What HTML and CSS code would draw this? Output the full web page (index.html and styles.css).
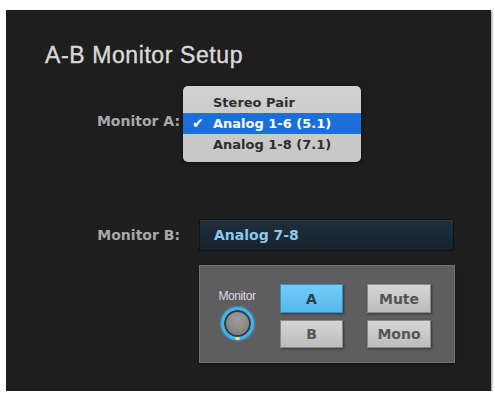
FILE: index.html
```html
<!DOCTYPE html>
<html lang="en">

<head>
    <meta charset="UTF-8">
    <meta name="viewport" content="width=device-width, initial-scale=1.0">
    <title>A-B Monitor Setup</title>
    <link rel="stylesheet" href="styles.css">
</head>

<body>
    <div class="janela">
        <h1 class="titulo">A-B Monitor Setup</h1>

        <div class="linha_a">
            <div class="rotulo rotulo_a">Monitor A:</div>
            <ul class="menu">
                <li>Stereo Pair</li>
                <li class="selecionado"><span class="check">&#10004;</span>Analog 1-6 (5.1)</li>
                <li>Analog 1-8 (7.1)</li>
            </ul>
        </div>

        <div class="linha_b">
            <div class="rotulo">Monitor B:</div>
            <div class="caixa">Analog 7-8</div>
        </div>

        <div class="controles">
            <div class="grupo_knob">
                <span class="knob_label">Monitor</span>
                <div class="knob"></div>
            </div>
            <div class="botoes">
                <button class="botao ativo">A</button>
                <button class="botao">Mute</button>
                <button class="botao">B</button>
                <button class="botao">Mono</button>
            </div>
        </div>
    </div>
</body>

</html>
```

FILE: styles.css
```css
* {
    margin: 0;
    padding: 0;
    box-sizing: border-box;
}

body {
    background: #ffffff;
    font-family: "DejaVu Sans", sans-serif;
}

.janela {
    margin: 10px 0 0 6px;
    width: 485px;
    height: 381px;
    padding-top: 32px;
    background: #1e1e1e;
    box-shadow: 1px 1px 2px rgba(0, 0, 0, 0.45);
}

.titulo {
    margin-left: 39px;
    font-family: "Liberation Sans", Arial, sans-serif;
    font-size: 23px;
    font-weight: normal;
    letter-spacing: 0.6px;
    line-height: 26px;
    color: #d8d8d8;
    -webkit-text-stroke: 0.4px #d8d8d8;
}

.linha_a {
    display: flex;
    margin-top: 18px;
}

.rotulo {
    width: 174px;
    text-align: right;
    font-size: 14px;
    font-weight: bold;
    color: #a9a9a9;
}

.rotulo_a {
    margin-top: 25px;
    line-height: 21px;
}

.menu {
    list-style: none;
    margin-left: 3px;
    width: 178px;
    height: 76px;
    padding: 6px 0 7px 0;
    background: linear-gradient(#d0d0d0, #c6c6c6);
    border-radius: 5px;
    box-shadow: 0 1px 4px rgba(0, 0, 0, 0.6);
}

.menu li {
    height: 21px;
    line-height: 21px;
    padding-left: 30px;
    font-size: 13px;
    font-weight: bold;
    color: #2e2e2e;
    position: relative;
}

.menu .selecionado {
    background: #1b6fd8;
    color: #ffffff;
}

.check {
    position: absolute;
    left: 9px;
    color: #ffffff;
    font-size: 14px;
}

.linha_b {
    display: flex;
    margin-top: 57px;
}

.linha_b .rotulo {
    line-height: 32px;
}

.caixa {
    margin-left: 19px;
    width: 255px;
    height: 32px;
    padding-left: 14px;
    line-height: 30px;
    font-size: 14px;
    font-weight: bold;
    color: #8cc6f0;
    background: linear-gradient(#1f2f3b, #16232d);
    border: 1px solid #0c1318;
    box-shadow: inset 0 1px 0 rgba(255, 255, 255, 0.06);
}

.controles {
    display: flex;
    gap: 24px;
    margin: 14px 0 0 193px;
    width: 256px;
    height: 98px;
    padding: 18px 23px 0 18px;
    background: #5e5e5e;
    border: 1px solid #727272;
    box-shadow: 0 1px 2px rgba(0, 0, 0, 0.5);
}

.grupo_knob {
    width: 40px;
    display: flex;
    flex-direction: column;
    align-items: center;
}

.knob_label {
    margin-top: 6px;
    font-family: "Liberation Sans", Arial, sans-serif;
    font-size: 12px;
    letter-spacing: -0.4px;
    line-height: 12px;
    color: #dcd4ea;
}

.knob {
    position: relative;
    margin-top: 5px;
    width: 33px;
    height: 33px;
    border-radius: 50%;
    border: 3px solid #3cb4f2;
    background: radial-gradient(circle at 50% 35%, #a0a0a0, #7e7e7e 70%);
    box-shadow: 0 0 3px #3cb4f2, inset 0 0 0 2px #3a3a3a;
}

.knob::after {
    content: "";
    position: absolute;
    left: 11px;
    bottom: -3px;
    width: 5px;
    height: 3px;
    border-radius: 2px;
    background: #d6e27a;
}

.botoes {
    display: grid;
    grid-template-columns: 63px 64px;
    grid-template-rows: 29px 28px;
    gap: 7px 24px;
}

.botao {
    font-family: "DejaVu Sans", sans-serif;
    font-size: 14px;
    font-weight: bold;
    color: #555555;
    background: linear-gradient(#d6d6d6, #bcbcbc);
    border: 1px solid #8a8a8a;
    box-shadow: 1px 1px 2px rgba(0, 0, 0, 0.45);
}

.botao.ativo {
    color: #2c3c4a;
    background: linear-gradient(#72ccf6, #55b8ec);
    border-color: #3a8ec0;
}
```
